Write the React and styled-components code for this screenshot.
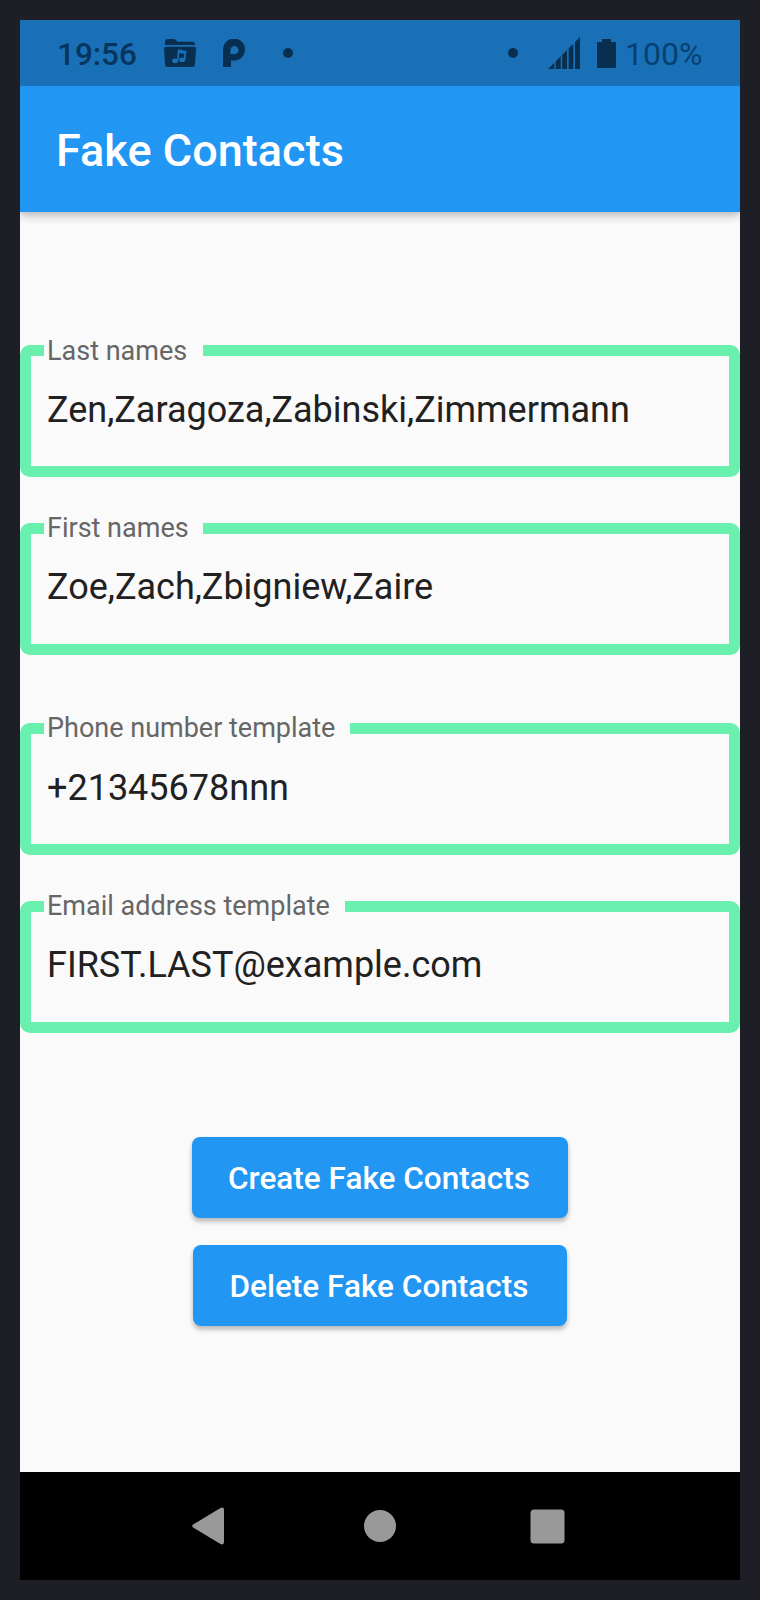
import React from "react";
import styled, { createGlobalStyle } from "styled-components";

const GlobalStyle = createGlobalStyle`
  * { box-sizing: border-box; }
  body { margin: 0; background: #1e1e27; font-family: Roboto, "Liberation Sans", sans-serif; }
`;

const Frame = styled.div`
  width: 760px;
  height: 1600px;
  padding: 20px;
  background: #1e1e27;
`;

const Screen = styled.div`
  display: flex;
  flex-direction: column;
  height: 1560px;
  background: #fafafa;
`;

const StatusBar = styled.header`
  display: flex;
  justify-content: space-between;
  height: 66px;
  padding: 0 38px 0 37px;
  background: #1a70b7;
  color: #082f4f;
`;

const StatusGroup = styled.div`
  display: flex;
  align-items: center;
`;

const Clock = styled.span`
  width: 107px;
  padding-top: 4px;
  font-size: 31.5px;
  line-height: 38px;
  font-weight: 500;
  color: #06355d;
  white-space: nowrap;
`;

const BatteryLevel = styled.span`
  width: 77px;
  margin-left: 9px;
  padding-top: 2px;
  font-size: 32px;
  line-height: 38px;
  color: #06406f;
  white-space: nowrap;
`;

const Glyph = styled.svg`
  display: block;
  flex: none;
  margin-left: ${(p) => p.$gap || 0}px;
  fill: currentColor;
`;

const AppBar = styled.div`
  display: flex;
  align-items: center;
  flex: none;
  height: 126px;
  padding: 4px 36px 0;
  background: #2196f3;
  box-shadow: 0 4px 10px rgba(0, 0, 0, 0.2), 0 2px 6px rgba(0, 0, 0, 0.1);
  clip-path: inset(0 0 -30px 0);
`;

const Title = styled.h1`
  margin: 0;
  font-size: 45px;
  line-height: 54px;
  font-weight: 500;
  color: #fff;
  letter-spacing: 0.03px;
`;

const Body = styled.main`
  display: flex;
  flex-direction: column;
  flex: 1;
  padding-top: 122px;
`;

const Field = styled.fieldset`
  height: 143px;
  margin: 0 0 ${(p) => p.$after}px;
  padding: 0 16px 0;
  border: 11px solid #69f0ae;
  border-radius: 10px;
  min-width: 0;
`;

const Label = styled.legend`
  width: ${(p) => p.$notch}px;
  height: 33px;
  margin-left: -3px;
  padding: ${(p) => p.$drop}px 0 0 3px;
  font-size: 27px;
  line-height: 33px;
  color: #666;
  white-space: nowrap;
`;

const Value = styled.div`
  padding-top: ${(p) => 21 + p.$drop}px;
  font-size: 36px;
  line-height: 42px;
  color: #212121;
  white-space: nowrap;
`;

const Actions = styled.div`
  display: flex;
  flex-direction: column;
  align-items: center;
  gap: 27px;
`;

const Button = styled.button`
  width: ${(p) => p.$width}px;
  height: 81px;
  padding: 2px 2px 0 0;
  border: 0;
  border-radius: 8px;
  background: #2196f3;
  color: #fff;
  font: 500 31.5px/38px Roboto, "Liberation Sans", sans-serif;
  letter-spacing: 0.02px;
  box-shadow: 0 4px 5px rgba(0, 0, 0, 0.18), 0 2px 5px rgba(0, 0, 0, 0.12);
  white-space: nowrap;
`;

const NavBar = styled.nav`
  display: flex;
  align-items: center;
  flex: none;
  height: 108px;
  padding-left: 172px;
  background: #000;
  color: #999;
`;

const fields = [
  { label: "Last names", value: "Zen,Zaragoza,Zabinski,Zimmermann", notch: 159, after: 35, labelDrop: 1, valueDrop: 1 },
  { label: "First names", value: "Zoe,Zach,Zbigniew,Zaire", notch: 159, after: 57, labelDrop: 0, valueDrop: 0 },
  { label: "Phone number template", value: "+21345678nnn", notch: 306, after: 35, labelDrop: 0, valueDrop: 1 },
  { label: "Email address template", value: "FIRST.LAST@example.com", notch: 301, after: 104, labelDrop: 0, valueDrop: 0 },
];

const Dot = ({ gap }) => (
  <Glyph $gap={gap} width="10" height="10" viewBox="0 0 10 10">
    <circle cx="5" cy="5" r="5" />
  </Glyph>
);

export default function App() {
  return (
    <Frame>
      <GlobalStyle />
      <Screen>
        <StatusBar>
          <StatusGroup>
            <Clock>19:56</Clock>
            <Glyph width="32" height="28" viewBox="0 0 32 28">
              <path d="M1 6V3q0-3 3-3h5q2 0 3 1.200l1.500 1.600h14.500q3 0 3 2.500V6z" />
              <path d="M2 7.700h28q2.300 0 2 2.500L31 25q-.3 3-3 3H4q-2.700 0-3-3L0 10.200Q-.2 7.700 2 7.700z" />
              <g fill="#1a70b7">
                <path d="M14 10.300L22.500 12L21.300 21L19.700 20.800L20.400 15.100L15.400 14.100L14.300 22L12.700 21.800z" />
                <ellipse cx="11.200" cy="21.800" rx="3.100" ry="2.400" />
                <ellipse cx="18.200" cy="20.800" rx="3.100" ry="2.400" />
              </g>
            </Glyph>
            <Glyph $gap={27} width="22" height="28" viewBox="0 0 22 28">
              <path
                fillRule="evenodd"
                d="M0 28V11a11 11 0 1 1 11 10.500H8V28zM7.500 15h3.500A4 4 0 1 0 7.500 11z"
              />
            </Glyph>
            <Dot gap={38} />
          </StatusGroup>
          <StatusGroup>
            <Dot />
            <Glyph $gap={30} width="32" height="32" viewBox="0 0 32 32">
              <path d="M0 32l6.300-6.300V32zM7.700 24.300l5-5V32h-5zM14.200 17.800l4.800-4.800v19h-4.800zM20.700 11.300l4.600-4.600V32h-4.600zM27 5l5-5v32h-5z" />
            </Glyph>
            <Glyph $gap={17} width="19" height="29" viewBox="0 0 19 29">
              <path d="M5 0h9v3h5v26H0V3h5z" />
            </Glyph>
            <BatteryLevel>100%</BatteryLevel>
          </StatusGroup>
        </StatusBar>
        <AppBar>
          <Title>Fake Contacts</Title>
        </AppBar>
        <Body>
          {fields.map((f) => (
            <Field key={f.label} $after={f.after}>
              <Label $notch={f.notch} $drop={f.labelDrop}>{f.label}</Label>
              <Value $drop={f.valueDrop}>{f.value}</Value>
            </Field>
          ))}
          <Actions>
            <Button $width={376}>Create Fake Contacts</Button>
            <Button $width={374}>Delete Fake Contacts</Button>
          </Actions>
        </Body>
        <NavBar>
          <Glyph width="32" height="38" viewBox="0 0 32 38">
            <path d="M1.500 17.200L28.500 1Q32-.6 32 3v32q0 3.500-3.500 2L1.500 20.800Q-1 19 1.500 17.200z" />
          </Glyph>
          <Glyph $gap={140} width="32" height="32" viewBox="0 0 32 32">
            <circle cx="16" cy="16" r="16" />
          </Glyph>
          <Glyph $gap={134} width="35" height="35" viewBox="0 0 35 35">
            <rect x="0.500" y="0.500" width="34" height="34" rx="3.500" />
          </Glyph>
        </NavBar>
      </Screen>
    </Frame>
  );
}
